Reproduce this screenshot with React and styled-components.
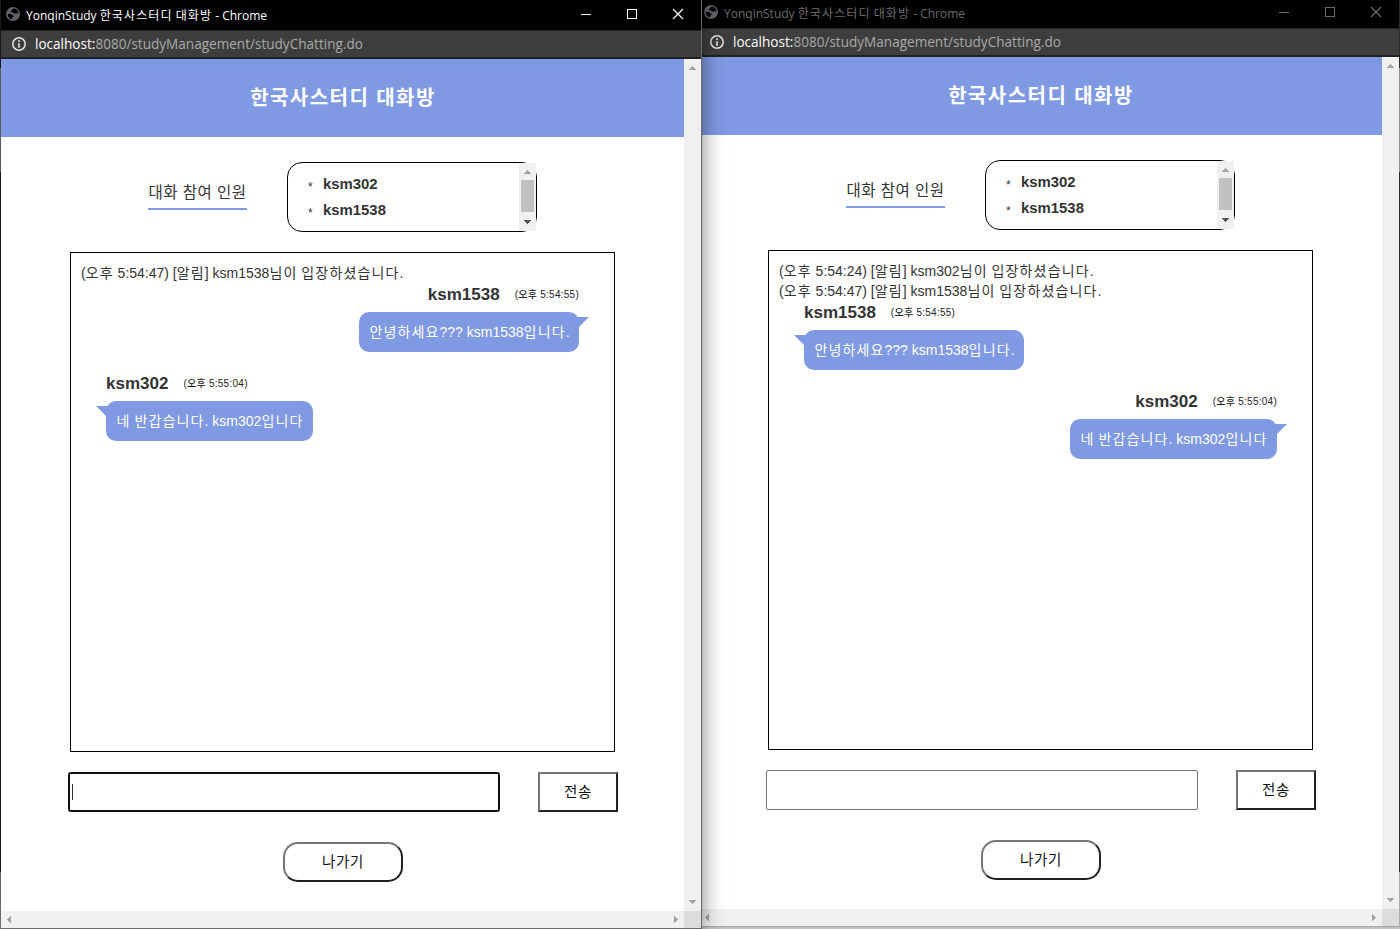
import React from 'react';
import styled, { createGlobalStyle, css } from 'styled-components';

const BLUE = '#7f99e2';
const KR = '"Liberation Sans", "Noto Sans CJK KR", sans-serif';
const UI = '"Open Sans", "Noto Sans CJK KR", sans-serif';

const Global = createGlobalStyle`
  *, *::before, *::after { box-sizing: border-box; }
  html, body { margin: 0; height: 929px; overflow: hidden; background: #cfcfcf; }
  body { font-family: ${KR}; color: #333; }
  h1, h2, p, ul { margin: 0; padding: 0; font-weight: inherit; }
`;

const Desktop = styled.main`
  position: relative;
  width: 1400px;
  height: 929px;
  overflow: hidden;
  background: linear-gradient(#333 0 68px, #aaa 68px 172px, #333 172px 872px, #c8c8c8 872px);
`;

const Window = styled.section`
  position: absolute;
  left: ${(p) => p.$x}px;
  top: ${(p) => p.$y}px;
  z-index: ${(p) => (p.$active ? 2 : 1)};
  width: 702px;
  height: 929px;
  display: flex;
  flex-direction: column;
  border: 1px solid;
  border-color: ${(p) =>
    p.$active ? 'transparent #6b6b6b #6b6b6b rgba(0, 0, 0, 0.3)' : 'transparent rgba(0, 0, 0, 0.1) #a6a6a6 transparent'};
  border-top: 0;
  background: #fff;
  background-clip: padding-box;
  box-shadow: ${(p) => (p.$active ? '0 2px 20px rgba(0, 0, 0, 0.5)' : '0 0 6px rgba(0, 0, 0, 0.08)')};
`;

const TitleBar = styled.header`
  flex: none;
  height: 30px;
  display: flex;
  align-items: flex-start;
  padding-left: 5px;
  background: #000;
  color: ${(p) => (p.$active ? '#fff' : '#6c6c6c')};
`;

const Favicon = styled.svg`
  width: 14px;
  height: 14px;
  margin-top: 7px;
`;

const WindowTitle = styled.h1`
  flex: 1;
  margin: 1px 0 0 6px;
  font: 12px/29px ${UI};
  white-space: nowrap;
`;

const Controls = styled.div`
  display: flex;
  svg { display: block; width: 46px; height: 30px; fill: none; stroke: currentColor; }
`;

const AddressBar = styled.div`
  flex: none;
  height: 29px;
  display: flex;
  align-items: center;
  padding-left: 11px;
  border-top: 1px solid #252525;
  border-bottom: 2px solid #202020;
  background: #3e3e3e;
  color: #a9a9a9;
  font: 13.57px/26px ${UI};
  white-space: nowrap;
  svg { margin-right: 9px; }
  b { font-weight: 400; color: #fff; }
`;

const Viewport = styled.div`
  flex: 1;
  display: grid;
  grid-template: 852px 17px / 683px 17px;
`;

const Track = styled.div`
  display: flex;
  flex-direction: ${(p) => (p.$horizontal ? 'row' : 'column')};
  justify-content: space-between;
  align-items: center;
  background: #f0f0f0;
  svg { display: block; flex: none; width: 17px; height: 17px; }
`;

const Corner = styled.div`
  background: #dcdcdc;
`;

const Page = styled.div`
  display: flex;
  flex-direction: column;
  background: #fff;
`;

const Banner = styled.div`
  flex: none;
  height: 78px;
  padding-left: 1px;
  background: ${BLUE};
  color: #fff;
  text-align: center;
  font: bold 20px/78px ${KR};
  letter-spacing: 1.45px;
`;

const Participants = styled.div`
  display: flex;
  align-items: flex-start;
  height: 70px;
  margin: 25px 0 0 147px;
`;

const Label = styled.h2`
  width: 99px;
  height: 29px;
  margin: 19px 40px 0 0;
  border-bottom: 2px solid ${BLUE};
  font: 400 15.5px/23px ${KR};
  text-align: center;
  letter-spacing: 0.5px;
  white-space: nowrap;
`;

const MemberBox = styled.div`
  width: 250px;
  height: 70px;
  display: flex;
  border: 1px solid #000;
  border-radius: 15px;
`;

const MemberList = styled.ul`
  flex: 1;
  padding: 8px 0 0 20px;
  list-style: none;
`;

const Member = styled.li`
  height: 26px;
  display: flex;
  font: bold 14.9px/26px ${KR};
  &::before {
    content: '*';
    width: 15px;
    font: 12px/32px ${KR};
  }
`;

const ScrollColumn = styled(Track)`
  width: 17px;
  height: 68px;
`;

const Thumb = styled.div`
  width: 13px;
  height: 32px;
  margin-bottom: 2px;
  background: #c1c1c1;
`;

const ChatLog = styled.div`
  flex: none;
  width: 545px;
  height: 500px;
  margin: 20px 0 0 69px;
  padding: 10px;
  border: 1px solid #000;
`;

const Notice = styled.p`
  height: 20px;
  font: 14px/20px ${KR};
  white-space: nowrap;
`;

const Hangul = styled.span`
  letter-spacing: ${(p) => p.$spacing}px;
`;

const Message = styled.article`
  display: flex;
  flex-direction: column;
  align-items: ${(p) => (p.$mine ? 'flex-end' : 'flex-start')};
  height: 89px;
  padding: 0 25px;
`;

const Meta = styled.div`
  height: 29px;
  display: flex;
  font: bold 17px/23px ${KR};
  time {
    margin-left: 15px;
    font: 500 10px/23px ${KR};
    letter-spacing: 0.26px;
    color: #222;
  }
`;

const Bubble = styled.p`
  position: relative;
  height: 40px;
  width: ${(p) => p.$width}px;
  padding-left: 1px;
  border-radius: 10px;
  background: ${BLUE};
  color: #fff;
  font: 14px/40px ${KR};
  text-align: center;
  white-space: nowrap;
  &::after {
    content: '';
    position: absolute;
    top: 5px;
    width: 13px;
    height: 10px;
    background: ${BLUE};
    ${(p) =>
      p.$mine
        ? css`right: -10px; clip-path: polygon(0 0, 100% 0, 3px 100%, 0 100%);`
        : css`left: -10px; clip-path: polygon(0 0, 100% 0, 100% 100%, 10px 100%);`}
  }
`;

const Composer = styled.div`
  display: flex;
  justify-content: space-between;
  width: 550px;
  height: 40px;
  margin: 20px 0 0 67px;
`;

const Field = styled.div`
  width: 432px;
  height: 40px;
  display: flex;
  align-items: center;
  border: ${(p) => (p.$focused ? '2px solid #101010' : '1px solid #767676')};
  border-radius: ${(p) => (p.$focused ? 3 : 2)}px;
  padding-left: 2px;
`;

const Caret = styled.span`
  width: 1px;
  height: 16px;
  background: #333;
`;

const Button = styled.button`
  width: ${(p) => (p.$round ? 120 : 80)}px;
  height: 40px;
  padding: 0 0 4px;
  border: 2px solid;
  border-color: #767676 #212121 #212121 #767676;
  border-radius: ${(p) => (p.$round ? 15 : 0)}px;
  background: #fff;
  color: #111;
  font: 400 14.5px ${KR};
  letter-spacing: 0.6px;
`;

const Leave = styled.div`
  margin: 30px 0 0 282px;
`;

const arrows = {
  up: 'M5 11h7l-3.5-4z',
  down: 'M5 6h7l-3.5 4z',
  left: 'M10 5v7l-4-3.5z',
  right: 'M7 5v7l4-3.5z',
};

const Arrow = ({ dir, dark }) => (
  <svg viewBox="0 0 17 17" shapeRendering="crispEdges">
    <path d={arrows[dir]} fill={dark ? '#505050' : '#a3a3a3'} />
  </svg>
);

const Globe = () => (
  <Favicon viewBox="0 0 14 14">
    <circle cx="7" cy="7" r="7" fill="#5f6368" />
    <path
      d="M8.2 1.6C6.5 1.8 6.8 3 5.6 3.4 4.3 3.8 4.6 5.200 6 5.300c1.300.1 1.500 1.200 2.700 1.300 1 .1 1.800-.6 3.600-.2.200-2.400-1.600-4.500-4.100-4.800z"
      fill="#000"
    />
    <path
      d="M1.600 6.800c1.400 0 3.300-.1 4.100.8.700.8 1.900.6 1.800 1.700-.1 1-1.200.8-1.500 1.600-.2.600.1 1.100-.5 1.400C3.200 11.700 1.500 9.500 1.600 6.800z"
      fill="#000"
    />
  </Favicon>
);

const Info = () => (
  <svg width="14" height="14" viewBox="0 0 14 14">
    <circle cx="7" cy="7" r="6.2" fill="none" stroke="#e4e4e4" strokeWidth="1.5" />
    <path d="M6.200 3.300h1.600v1.600H6.200zM6.200 6.200h1.600v4.500H6.200z" fill="#e4e4e4" />
  </svg>
);

// Latin keeps its own pitch; only the Hangul runs are spaced out.
const Spaced = ({ text, by = 1.14 }) =>
  text
    .split(/([가-힣]+)/)
    .map((run, i) => (i % 2 ? <Hangul key={i} $spacing={by}>{run}</Hangul> : run));

function ChatWindow({ x, y, active, notices, messages, me }) {
  return (
    <Window $x={x} $y={y} $active={active}>
      <TitleBar $active={active}>
        <Globe />
        <WindowTitle>
          <Spaced text="YonqinStudy 한국사스터디 대화방 - Chrome" by={1.1} />
        </WindowTitle>
        <Controls>
          <svg viewBox="0 0 46 30"><path d="M18 14.5h10" /></svg>
          <svg viewBox="0 0 46 30"><rect x="18.5" y="9.5" width="9" height="9" /></svg>
          <svg viewBox="0 0 46 30"><path d="M18 9l10 10M28 9l-10 10" strokeWidth="1.2" /></svg>
        </Controls>
      </TitleBar>
      <AddressBar>
        <Info />
        <b>localhost:</b>8080/studyManagement/studyChatting.do
      </AddressBar>
      <Viewport>
        <Page>
          <Banner>한국사스터디 대화방</Banner>
          <Participants>
            <Label>대화 참여 인원</Label>
            <MemberBox>
              <MemberList>
                <Member>ksm302</Member>
                <Member>ksm1538</Member>
              </MemberList>
              <ScrollColumn>
                <Arrow dir="up" />
                <Thumb />
                <Arrow dir="down" dark />
              </ScrollColumn>
            </MemberBox>
          </Participants>
          <ChatLog>
            {notices.map((n) => (
              <Notice key={n}><Spaced text={n} /></Notice>
            ))}
            {messages.map((m) => (
              <Message key={m.time} $mine={m.user === me}>
                <Meta>
                  {m.user}
                  <time>({m.time})</time>
                </Meta>
                <Bubble $mine={m.user === me} $width={m.width}><Spaced text={m.text} /></Bubble>
              </Message>
            ))}
          </ChatLog>
          <Composer>
            <Field $focused={active}>{active && <Caret />}</Field>
            <Button>전송</Button>
          </Composer>
          <Leave>
            <Button $round>나가기</Button>
          </Leave>
        </Page>
        <Track>
          <Arrow dir="up" />
          <Arrow dir="down" />
        </Track>
        <Track $horizontal>
          <Arrow dir="left" />
          <Arrow dir="right" />
        </Track>
        <Corner />
      </Viewport>
    </Window>
  );
}

const messages = [
  { user: 'ksm1538', time: '오후 5:54:55', text: '안녕하세요??? ksm1538입니다.', width: 220 },
  { user: 'ksm302', time: '오후 5:55:04', text: '네 반갑습니다. ksm302입니다', width: 207 },
];

const joined302 = '(오후 5:54:24) [알림] ksm302님이 입장하셨습니다.';
const joined1538 = '(오후 5:54:47) [알림] ksm1538님이 입장하셨습니다.';

export default function App() {
  return (
    <Desktop>
      <Global />
      <ChatWindow x={0} y={0} active me="ksm1538" notices={[joined1538]} messages={messages} />
      <ChatWindow x={698} y={-2} me="ksm302" notices={[joined302, joined1538]} messages={messages} />
    </Desktop>
  );
}
